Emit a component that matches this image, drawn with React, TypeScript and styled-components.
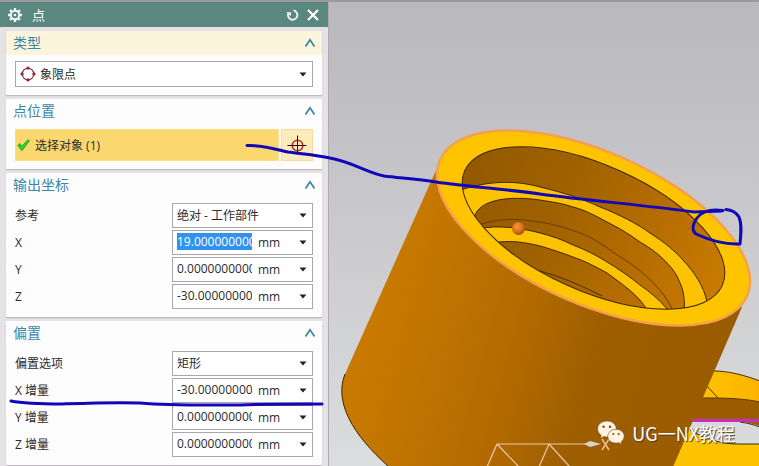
import React, { useState } from 'react';
import styled, { createGlobalStyle } from 'styled-components';

const GlobalStyle = createGlobalStyle`
  *, *::before, *::after { box-sizing: border-box; }
  html, body { margin: 0; height: 100%; overflow: hidden; }
  #root { height: 100%; }
  body, button, input, select {
    font-family: "Open Sans", "Noto Sans CJK SC", sans-serif;
    font-size: 12px;
    color: #2b2b2b;
  }
`;

const Workspace = styled.main`
  position: relative;
  display: flex;
  min-height: 100vh;
  border-top: 2px solid #9a9a9c;
  background: #c5c5c8;
  overflow: hidden;
`;

const Dialog = styled.form`
  display: flex;
  flex-direction: column;
  flex: 0 0 329px;
  background: #e5e2e5;
  border-right: 1px solid #adabb0;
`;

const TitleBar = styled.header`
  display: flex;
  align-items: center;
  gap: 8px;
  height: 25px;
  padding: 0 9px 0 8px;
  background: #5a887e;
  color: #fff;
`;

const Title = styled.h1`
  flex: 1;
  margin: 0;
  padding-left: 2px;
  font-size: 13px;
  line-height: 24px;
  font-weight: 400;
`;

const IconButton = styled.button`
  display: grid;
  place-items: center;
  padding: 0;
  border: 0;
  background: none;
  color: inherit;
`;

const Sections = styled.div`
  display: flex;
  flex-direction: column;
  gap: 4px;
  padding: 4px 6px 0;
`;

const Section = styled.section`
  padding-bottom: 8px;
  background: #fefdfe;
  box-shadow: 0 1px 1px #bdbabf;
`;

const SectionHeader = styled.div<{ $tinted?: boolean }>`
  display: flex;
  align-items: center;
  justify-content: space-between;
  height: 24px;
  margin-bottom: 6px;
  padding: 0 6px 0 7px;
  background: ${(p) => (p.$tinted ? '#fdf4dc' : 'transparent')};
`;

const SectionTitle = styled.h2`
  margin: 0;
  font-size: 14px;
  line-height: 24px;
  font-weight: 400;
  color: #3c86a6;
`;

const Rows = styled.div`
  display: flex;
  flex-direction: column;
  gap: 2px;
  padding: 0 9px;
`;

const Row = styled.div`
  display: grid;
  grid-template-columns: 1fr 141px;
  align-items: center;
`;

const Label = styled.label`
  line-height: 24px;
`;

const ControlBox = styled.div<{ $tall?: boolean }>`
  display: flex;
  align-items: center;
  gap: ${(p) => (p.$tall ? 4 : 0)}px;
  height: ${(p) => (p.$tall ? 26 : 25)}px;
  padding: 0 5px 0 4px;
  border: 1px solid #a9a6af;
  background: #fff;
`;

const Select = styled.select`
  flex: 1;
  min-width: 0;
  height: 22px;
  padding: 0;
  border: 0;
  outline: 0;
  appearance: none;
  background: transparent;
`;

const NumberInput = styled.input<{ $selected?: boolean }>`
  width: 75px;
  height: 17px;
  padding: 0;
  border: 0;
  outline: 0;
  margin: 0 6px 2px 0;
  line-height: 17px;
  background: ${(p) => (p.$selected ? '#3193ee' : 'transparent')};
  color: ${(p) => (p.$selected ? '#fff' : '#2b2b2b')};
`;

const Unit = styled.span`
  flex: 1;
  line-height: 22px;
`;

const PickRow = styled.div`
  display: grid;
  grid-template-columns: 1fr 32px;
  gap: 2px;
  height: 32px;
  padding: 0 9px;
`;

const PickTarget = styled.button`
  display: flex;
  align-items: center;
  gap: 5px;
  padding: 0 1px;
  border: 1px solid #fbdc86;
  background: #fad76f;
  text-align: left;
`;

const PickTool = styled.button`
  display: grid;
  place-items: center;
  padding: 0;
  border: 1px solid #f6dc98;
  background: #fdebbc;
`;

const Viewport = styled.div`
  position: relative;
  flex: 1;
  min-width: 0;
  background: linear-gradient(#b9b9bc, #c3c3c7 30%, #d0d0d3 65%, #dadddd);
`;

const SceneSvg = styled.svg`
  position: absolute;
  inset: 0;
  width: 100%;
  height: 100%;
`;

const Markup = styled.svg`
  position: absolute;
  inset: -2px 0 0 0;
  width: 100%;
  height: auto;
  pointer-events: none;
`;

const Watermark = styled.div`
  position: absolute;
  right: 24px;
  bottom: 17px;
  display: flex;
  align-items: center;
  gap: 7px;
  font-family: "Noto Sans CJK SC", sans-serif;
  font-size: 18px;
  line-height: 32px;
  color: #fff;
  text-shadow: 1px 1px 1px #4a3a20;
`;

const Caret = () => (
  <svg width="8" height="5" viewBox="0 0 8 5" aria-hidden="true">
    <path d="M0.5 0.5h7L4 4.5z" fill="#222" />
  </svg>
);

const GearIcon = () => (
  <svg width="14" height="14" viewBox="0 0 14 14" aria-hidden="true">
    <g stroke="#f2f8f6" strokeWidth="2.4">
      <path d="M7 0v14M0 7h14M2 2l10 10M12 2L2 12" />
    </g>
    <circle cx="7" cy="7" r="4.2" fill="#5a887e" stroke="#f2f8f6" strokeWidth="2" />
    <circle cx="7" cy="7" r="1.3" fill="#f2f8f6" />
  </svg>
);

const ResetIcon = () => (
  <svg width="13" height="12" viewBox="0 0 13 12" aria-hidden="true">
    <path d="M7.5 1.4A4.7 4.7 0 1 1 2.2 4.6" fill="none" stroke="#f2f8f6" strokeWidth="1.8" />
    <path d="M0.2 3.2h4.8v4z" fill="#f2f8f6" />
  </svg>
);

const CloseIcon = () => (
  <svg width="12" height="12" viewBox="0 0 12 12" aria-hidden="true">
    <path d="M1 1l10 10M11 1L1 11" stroke="#fff" strokeWidth="2.2" />
  </svg>
);

const CollapseIcon = () => (
  <svg width="12" height="10" viewBox="0 0 12 10" aria-hidden="true">
    <path d="M1.5 8.5L6 1.8l4.5 6.7" fill="none" stroke="#3b88a4" strokeWidth="1.8" />
  </svg>
);

const QuadrantIcon = () => (
  <svg width="16" height="16" viewBox="0 0 16 16" aria-hidden="true">
    <circle cx="8" cy="8" r="5.8" fill="none" stroke="#4a3a40" strokeWidth="1.1" />
    <g fill="#b3202c">
      <circle cx="8" cy="2.1" r="1.7" />
      <circle cx="8" cy="13.9" r="1.7" />
      <circle cx="2.1" cy="8" r="1.7" />
      <circle cx="13.9" cy="8" r="1.7" />
    </g>
  </svg>
);

const CheckIcon = () => (
  <svg width="13" height="12" viewBox="0 0 13 12" aria-hidden="true">
    <path d="M0.8 6.2L3 4.6l2 2.6L10.8 0.8l1.6 1L5.4 11.2H4.2z" fill="#35cf32" stroke="#1f9a25" strokeWidth="0.8" />
  </svg>
);

const CrosshairIcon = () => (
  <svg width="20" height="20" viewBox="0 0 20 20" aria-hidden="true">
    <circle cx="10.5" cy="10.5" r="5.3" fill="none" stroke="#c32a1c" strokeWidth="1.5" />
    <path d="M10.5 0.5v19M0.5 10.5h19" stroke="#2a1010" strokeWidth="1" />
  </svg>
);

const ChatIcon = () => (
  <svg width="28" height="26" viewBox="0 0 28 26" aria-hidden="true">
    <g fill="#fff3df" stroke="#6d4a1c" strokeWidth="0.6">
      <path d="M10 1C4.500 1 0.600 4.500 0.600 9c0 2.600 1.400 4.900 3.600 6.300L3.200 18.500l3.600-1.900c1 .3 2.100.4 3.200.4 5.300 0 9.300-3.500 9.300-8S15.300 1 10 1z" />
      <path d="M19 9.300c-4.600 0-8.200 3-8.200 6.900s3.600 6.900 8.200 6.900c1 0 2-.1 2.900-.4l3.100 1.800-.8-2.900c1.900-1.300 3-3.200 3-5.400 0-3.900-3.600-6.900-8.200-6.900z" />
    </g>
    <g fill="#6d4a1c">
      <circle cx="6.600" cy="6.800" r="1.200" />
      <circle cx="13" cy="6.800" r="1.200" />
      <circle cx="16.300" cy="14" r="1" />
      <circle cx="21.700" cy="14" r="1" />
    </g>
  </svg>
);

interface SectionProps {
  title: string;
  tinted?: boolean;
  children: React.ReactNode;
}

const Group = ({ title, tinted, children }: SectionProps) => {
  const [open, setOpen] = useState(true);
  return (
    <Section>
      <SectionHeader $tinted={tinted}>
        <SectionTitle>{title}</SectionTitle>
        <IconButton type="button" aria-label={title} aria-expanded={open} onClick={() => setOpen(!open)}>
          <CollapseIcon />
        </IconButton>
      </SectionHeader>
      {open && children}
    </Section>
  );
};

const SelectRow = ({ id, label, value }: { id: string; label: string; value: string }) => (
  <Row>
    <Label htmlFor={id}>{label}</Label>
    <ControlBox>
      <Select id={id} defaultValue={value}>
        <option>{value}</option>
      </Select>
      <Caret />
    </ControlBox>
  </Row>
);

interface NumberRowProps {
  id: string;
  label: string;
  value: string;
  selected?: boolean;
}

const NumberRow = ({ id, label, value, selected }: NumberRowProps) => (
  <Row>
    <Label htmlFor={id}>{label}</Label>
    <ControlBox>
      <NumberInput id={id} defaultValue={value} $selected={selected} />
      <Unit>mm</Unit>
      <IconButton type="button" aria-label={`${label} mm`}>
        <Caret />
      </IconButton>
    </ControlBox>
  </Row>
);

const Scene = () => (
  <SceneSvg viewBox="329 2 430 464" preserveAspectRatio="xMinYMin slice" aria-hidden="true">
    <defs>
      <linearGradient id="body" gradientUnits="userSpaceOnUse" x1="380" y1="300" x2="710" y2="390">
        <stop offset="0" stopColor="#c87900" />
        <stop offset="0.15" stopColor="#c27400" />
        <stop offset="0.45" stopColor="#b06900" />
        <stop offset="0.65" stopColor="#9e5e00" />
        <stop offset="1" stopColor="#9a5c00" />
      </linearGradient>
      <linearGradient id="bore" gradientUnits="userSpaceOnUse" x1="470" y1="180" x2="715" y2="290">
        <stop offset="0" stopColor="#955a00" />
        <stop offset="0.35" stopColor="#a06200" />
        <stop offset="0.7" stopColor="#b66d00" />
        <stop offset="1" stopColor="#c87a00" />
      </linearGradient>
      <radialGradient id="ball" cx="0.4" cy="0.35" r="0.7">
        <stop offset="0" stopColor="#f79a43" />
        <stop offset="0.6" stopColor="#d86f12" />
        <stop offset="1" stopColor="#8f4300" />
      </radialGradient>
      <clipPath id="mouth">
        <ellipse cx="593.5" cy="228" rx="141" ry="63" transform="rotate(24 593.5 228)" />
      </clipPath>
      <linearGradient id="flange" x1="0" x2="1">
        <stop offset="0" stopColor="#ffc400" />
        <stop offset="1" stopColor="#fdb400" />
      </linearGradient>
    </defs>

    <path d="M690 371H714C728 371 744 375 760 381V404H690z" fill="url(#flange)" />
    <path d="M714 371C728 371 744 375 760 381M706 385L718 398" fill="none" stroke="#4a2e00" strokeWidth="1" />
    <path d="M690 398H712C730 398 746 399 760 402V426C750 423 742 421 730 421H680z" fill="#9a5c00" />
    <path d="M700 398H712C730 398 746 399 760 402" fill="none" stroke="#5a3600" strokeWidth="1" />
    <path d="M680 425C700 436 715 444 738 444H760V467H660z" fill="#fdc200" />
    <path d="M690 430C706 439 720 444 738 444H760M740 422C748 423 754 425 760 427" fill="none" stroke="#3a2a10" strokeWidth="1" />
    <path d="M688 420.500H760" stroke="#c92cc0" strokeWidth="3" />

    <path d="M437 168L345 374C334 402 352 434 389 467H673L742 307z" fill="url(#body)" />
    <path d="M345 374C334 402 352 434 389 467" fill="none" stroke="#3a2800" strokeWidth="1" />

    <ellipse cx="593.5" cy="228" rx="168" ry="76" transform="rotate(24 593.5 228)" fill="#fec400" stroke="#f5a04e" strokeWidth="2.500" />
    <g clipPath="url(#mouth)">
      <rect x="450" y="140" width="290" height="180" fill="url(#bore)" />
      <path
        d="M455 192C490 179 518 181 540 187C565 193 583 199 600 207C620 215 636 223 650 233C664 242 674 250 683 260C694 272 704 286 707 302L684 312C685 302 684 291 680 283C677 275 673 269 667 263C659 254 650 248 640 242C629 234 619 228 607 222C596 216 585 210 573 207C562 203 551 202 540 200C512 196 479 198 474 218z"
        fill="#fdc200" stroke="#3d2700" strokeWidth="1"
      />
      <path d="M480 225C495 218 520 218 545 223C560 226 570 229 580 233C594 238 606 247 617 255C640 268 664 290 672 309" fill="none" stroke="#6b3900" strokeWidth="1" />
      <path
        d="M478 229C500 224 525 229 540 233C552 236 563 240 573 245C586 250 596 255 607 262C619 269 630 277 640 285C650 292 660 300 668 310L650 315C646 308 643 303 637 297C628 288 618 281 607 273C596 267 585 261 573 257C562 253 551 249 540 246C524 242 509 240 492 243z"
        fill="#fdc200" stroke="#3d2700" strokeWidth="1"
      />
      <path d="M528 268C550 273 570 280 602 296" fill="none" stroke="#4c2e00" strokeWidth="1" />
    </g>
    <ellipse cx="593.5" cy="228" rx="141" ry="63" transform="rotate(24 593.5 228)" fill="none" stroke="#3d2700" strokeWidth="1" />
    <circle cx="518.500" cy="228.500" r="6.500" fill="url(#ball)" />

    <path d="M586 444H497M497 444L487 467M497 444L519 467M549 444L539 467M549 444L570 467" fill="none" stroke="#efc9a8" strokeWidth="1.200" />
    <path d="M584 444L590 441L601 444L590 447z" fill="#d4d3cf" />
    <path d="M602 439L609 450M609 439L602 450" stroke="#f0bd91" strokeWidth="1.500" />
  </SceneSvg>
);

const PenMarks = () => (
  <Markup viewBox="0 0 759 466" preserveAspectRatio="xMinYMin meet" aria-hidden="true">
    <g fill="none" stroke="#1208b8" strokeWidth="3" strokeLinecap="round" strokeLinejoin="round">
      <path d="M247 145.500C262 145 275 149 288 152C302 154 316 155 330 158C352 162 366 172 384 176C400 178 418 179 436 182C470 187 505 189 540 194C590 201 645 205 694 212L722 211" />
      <path d="M723 210.500C712 209 702 211 697 218C692 225 692 231 696 234C707 239 724 245 740 244C741 234 742 224 739 217C736 212 732 210 726 209.500" />
      <path d="M11 401C26 404 42 404 62 404C90 403 115 402 140 403C175 406 210 405 240 405C270 404 295 404 322 404" />
    </g>
  </Markup>
);

export default function App() {
  return (
    <>
      <GlobalStyle />
      <Workspace>
        <Dialog>
          <TitleBar>
            <GearIcon />
            <Title>点</Title>
            <IconButton type="button" aria-label="重置">
              <ResetIcon />
            </IconButton>
            <IconButton type="button" aria-label="关闭">
              <CloseIcon />
            </IconButton>
          </TitleBar>
          <Sections>
            <Group title="类型" tinted>
              <Rows>
                <ControlBox $tall>
                  <QuadrantIcon />
                  <Select aria-label="类型" defaultValue="象限点">
                    <option>象限点</option>
                  </Select>
                  <Caret />
                </ControlBox>
              </Rows>
            </Group>
            <Group title="点位置">
              <PickRow>
                <PickTarget type="button">
                  <CheckIcon />
                  选择对象 (1)
                </PickTarget>
                <PickTool type="button" aria-label="点位置">
                  <CrosshairIcon />
                </PickTool>
              </PickRow>
            </Group>
            <Group title="输出坐标">
              <Rows>
                <SelectRow id="reference" label="参考" value="绝对 - 工作部件" />
                <NumberRow id="x" label="X" value="19.000000000" selected />
                <NumberRow id="y" label="Y" value="0.0000000000" />
                <NumberRow id="z" label="Z" value="-30.000000000" />
              </Rows>
            </Group>
            <Group title="偏置">
              <Rows>
                <SelectRow id="offset" label="偏置选项" value="矩形" />
                <NumberRow id="dx" label="X 增量" value="-30.000000000" />
                <NumberRow id="dy" label="Y 增量" value="0.0000000000" />
                <NumberRow id="dz" label="Z 增量" value="0.0000000000" />
              </Rows>
            </Group>
          </Sections>
        </Dialog>
        <Viewport>
          <Scene />
          <Watermark>
            <ChatIcon />
            <span>UG一NX教程</span>
          </Watermark>
        </Viewport>
        <PenMarks />
      </Workspace>
    </>
  );
}
